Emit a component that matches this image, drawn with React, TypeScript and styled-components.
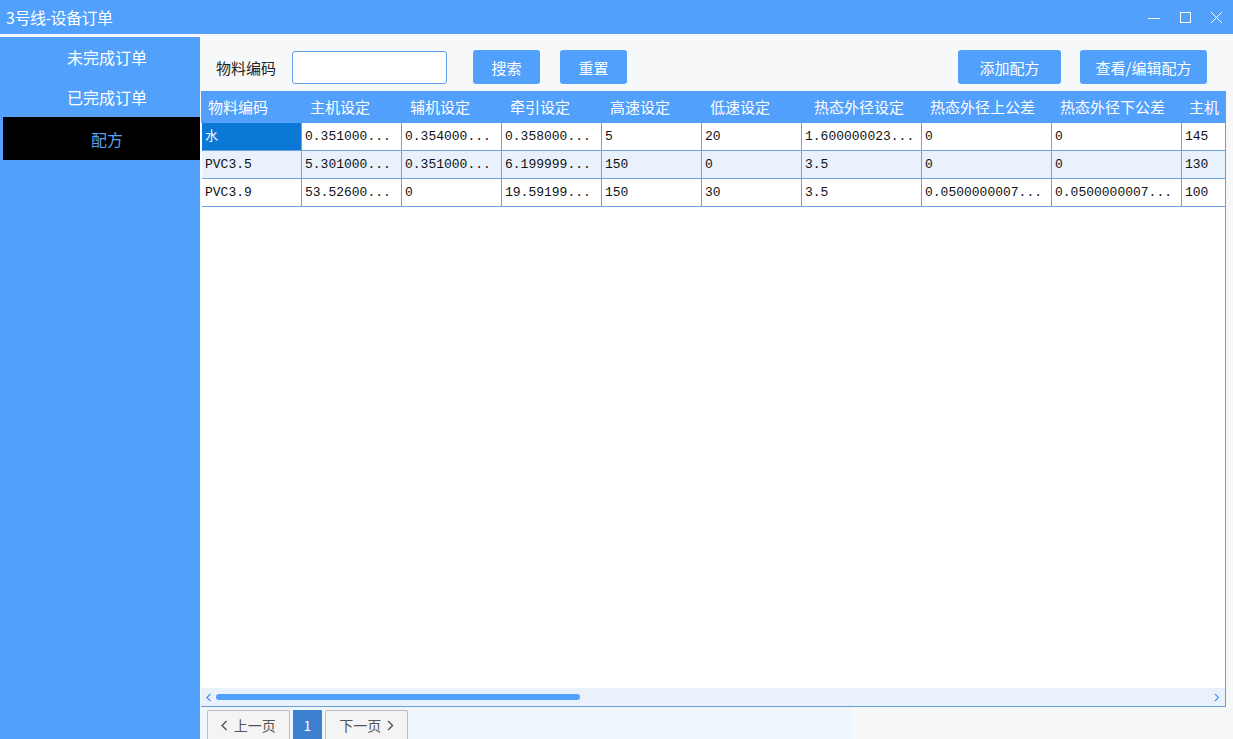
import React from "react";
import styled, { createGlobalStyle } from "styled-components";

const Global = createGlobalStyle`
  html, body { margin: 0; padding: 0; }
  body { width: 1233px; height: 739px; overflow: hidden; font-family: "Noto Sans CJK SC", "Liberation Sans", sans-serif; }
  * { box-sizing: border-box; }
`;

const BLUE = "#50a0fc";

const Window = styled.div`
  width: 1233px;
  height: 739px;
  display: flex;
  flex-direction: column;
  background: #f7f8f9;
  overflow: hidden;
`;

const TitleBar = styled.div`
  height: 34px;
  flex: 0 0 34px;
  background: ${BLUE};
  display: flex;
  align-items: center;
  padding-left: 6px;
  color: #fff;
  font-size: 16px;
`;

const Title = styled.div`
  flex: 1;
  letter-spacing: -0.5px;
`;

const Controls = styled.div`
  display: flex;
  align-items: center;
  gap: 18px;
  padding-right: 10px;
`;

const Body = styled.div`
  flex: 1;
  display: flex;
  min-height: 0;
`;

const Sidebar = styled.div`
  width: 200px;
  flex: 0 0 200px;
  margin-top: 3px;
  background: ${BLUE};
  display: flex;
  flex-direction: column;
`;

const NavItem = styled.div<{ $active?: boolean }>`
  height: ${(p) => (p.$active ? 43 : 40)}px;
  margin-left: ${(p) => (p.$active ? 3 : 0)}px;
  background: ${(p) => (p.$active ? "#000" : "transparent")};
  color: ${(p) => (p.$active ? "#5aa2f2" : "#fff")};
  display: flex;
  align-items: center;
  justify-content: center;
  font-size: 16px;
  padding-left: ${(p) => (p.$active ? 11 : 14)}px;
`;

const Main = styled.div`
  flex: 1;
  display: flex;
  flex-direction: column;
  padding-left: 1px;
  min-width: 0;
`;

const Toolbar = styled.div`
  height: 57px;
  flex: 0 0 57px;
  display: flex;
  align-items: center;
  padding-left: 15px;
  padding-right: 26px;
  padding-top: 9px;
`;

const Label = styled.span`
  font-size: 15px;
  color: #222;
  margin-right: 16px;
`;

const Input = styled.input`
  width: 155px;
  height: 33px;
  border: 1px solid #5f9ee8;
  border-radius: 3px;
  background: #fff;
  outline: none;
`;

const Button = styled.button<{ $w: number; $ml: number }>`
  width: ${(p) => p.$w}px;
  height: 34px;
  margin-left: ${(p) => p.$ml}px;
  background: ${BLUE};
  border: none;
  border-radius: 3px;
  color: #fff;
  font-family: "Noto Sans CJK SC", sans-serif;
  font-size: 15px;
  padding: 0;
`;

const Spacer = styled.div`
  flex: 1;
`;

const TableBox = styled.div`
  flex: 1;
  display: flex;
  flex-direction: column;
  min-height: 0;
  width: 1025px;
  border-right: 1px solid #6a9fd4;
  border-bottom: 1px solid #6a9fd4;
  background: #fff;
  overflow: hidden;
`;

const TableScroll = styled.div`
  flex: 1;
  overflow: hidden;
`;

const HeaderRow = styled.div`
  display: flex;
  height: 32px;
  background: ${BLUE};
  width: max-content;
`;

const HeadCell = styled.div<{ $w: number; $pl: number }>`
  width: ${(p) => p.$w}px;
  flex: 0 0 ${(p) => p.$w}px;
  padding-left: ${(p) => p.$pl}px;
  color: #fff;
  font-size: 15px;
  line-height: 32px;
  white-space: nowrap;
  overflow: hidden;
`;

const Rows = styled.div`
  padding-left: 1px;
`;

const Row = styled.div<{ $alt?: boolean }>`
  display: flex;
  height: 28px;
  width: max-content;
  background: ${(p) => (p.$alt ? "#e8f1fc" : "#fff")};
`;

const Cell = styled.div<{ $w: number; $sel?: boolean }>`
  width: ${(p) => p.$w}px;
  flex: 0 0 ${(p) => p.$w}px;
  border-right: 1px solid #6aa3e0;
  border-bottom: 1px solid #6aa3e0;
  padding-left: 3px;
  font-family: "Liberation Mono", "Noto Sans CJK SC", monospace;
  font-size: 13px;
  line-height: 27px;
  color: ${(p) => (p.$sel ? "#fff" : "#111")};
  background: ${(p) => (p.$sel ? "#0a78d4" : "transparent")};
  white-space: nowrap;
  overflow: hidden;
`;

const ScrollBar = styled.div`
  height: 18px;
  flex: 0 0 18px;
  background: #e8f1fc;
  display: flex;
  align-items: center;
  padding: 0 6px 0 5px;
`;

const Thumb = styled.div`
  width: 364px;
  height: 6px;
  margin-left: 5px;
  border-radius: 3px;
  background: ${BLUE};
`;

const Pager = styled.div`
  height: 32px;
  flex: 0 0 32px;
  width: 652px;
  background: #f0f6fd;
  display: flex;
  align-items: flex-end;
  padding-left: 6px;
  gap: 3px;
`;

const PageBtn = styled.div<{ $w: number }>`
  width: ${(p) => p.$w}px;
  height: 29px;
  border: 1px solid #bdbdbd;
  border-bottom: none;
  border-radius: 2px 2px 0 0;
  background: #f4f4f4;
  color: #555;
  font-size: 14px;
  display: flex;
  align-items: center;
  justify-content: center;
  gap: 6px;
`;

const PageNum = styled.div`
  width: 29px;
  height: 29px;
  background: #3d80cf;
  color: #fff;
  font-size: 14px;
  display: flex;
  align-items: center;
  justify-content: center;
`;

const cols: { name: string; w: number; pl: number }[] = [
  { name: "物料编码", w: 101, pl: 7 },
  { name: "主机设定", w: 100, pl: 8 },
  { name: "辅机设定", w: 100, pl: 8 },
  { name: "牵引设定", w: 100, pl: 8 },
  { name: "高速设定", w: 100, pl: 8 },
  { name: "低速设定", w: 100, pl: 8 },
  { name: "热态外径设定", w: 120, pl: 12 },
  { name: "热态外径上公差", w: 130, pl: 8 },
  { name: "热态外径下公差", w: 130, pl: 8 },
  { name: "主机", w: 100, pl: 7 },
];

const cellW = [100, 100, 100, 100, 100, 100, 120, 130, 130, 100];

const rows = [
  ["水", "0.351000...", "0.354000...", "0.358000...", "5", "20", "1.600000023...", "0", "0", "145"],
  ["PVC3.5", "5.301000...", "0.351000...", "6.199999...", "150", "0", "3.5", "0", "0", "130"],
  ["PVC3.9", "53.52600...", "0", "19.59199...", "150", "30", "3.5", "0.0500000007...", "0.0500000007...", "100"],
];

const Chevron = ({ dir, color, size = 10 }: { dir: "l" | "r"; color: string; size?: number }) => (
  <svg width={size * 0.6} height={size} viewBox="0 0 6 10">
    <path d={dir === "l" ? "M5 1 L1 5 L5 9" : "M1 1 L5 5 L1 9"} stroke={color} strokeWidth={1.3} fill="none" />
  </svg>
);

export default function App() {
  return (
    <Window>
      <Global />
      <TitleBar>
        <Title>3号线-设备订单</Title>
        <Controls>
          <svg width="13" height="13" viewBox="0 0 13 13">
            <path d="M0 7.5 H12" stroke="#fff" strokeWidth="1" />
          </svg>
          <svg width="13" height="13" viewBox="0 0 13 13">
            <rect x="1.5" y="1.5" width="10" height="10" stroke="#fff" strokeWidth="1" fill="none" />
          </svg>
          <svg width="13" height="13" viewBox="0 0 13 13">
            <path d="M1 1 L12 12 M12 1 L1 12" stroke="#fff" strokeWidth="1" />
          </svg>
        </Controls>
      </TitleBar>
      <Body>
        <Sidebar>
          <NavItem>未完成订单</NavItem>
          <NavItem>已完成订单</NavItem>
          <NavItem $active>配方</NavItem>
        </Sidebar>
        <Main>
          <Toolbar>
            <Label>物料编码</Label>
            <Input />
            <Button $w={67} $ml={26}>搜索</Button>
            <Button $w={67} $ml={20}>重置</Button>
            <Spacer />
            <Button $w={103} $ml={0}>添加配方</Button>
            <Button $w={127} $ml={19}>查看/编辑配方</Button>
          </Toolbar>
          <TableBox>
            <TableScroll>
              <HeaderRow>
                {cols.map((c) => (
                  <HeadCell key={c.name} $w={c.w} $pl={c.pl}>
                    {c.name}
                  </HeadCell>
                ))}
              </HeaderRow>
              <Rows>
                {rows.map((r, i) => (
                  <Row key={i} $alt={i === 1}>
                    {r.map((v, j) => (
                      <Cell key={j} $w={cellW[j]} $sel={i === 0 && j === 0}>
                        {v}
                      </Cell>
                    ))}
                  </Row>
                ))}
              </Rows>
            </TableScroll>
            <ScrollBar>
              <Chevron dir="l" color="#3d8ef0" size={9} />
              <Thumb />
              <Spacer />
              <Chevron dir="r" color="#3d8ef0" size={9} />
            </ScrollBar>
          </TableBox>
          <Pager>
            <PageBtn $w={83}>
              <Chevron dir="l" color="#555" size={11} />
              <span>上一页</span>
            </PageBtn>
            <PageNum>1</PageNum>
            <PageBtn $w={83}>
              <span>下一页</span>
              <Chevron dir="r" color="#555" size={11} />
            </PageBtn>
          </Pager>
        </Main>
      </Body>
    </Window>
  );
}
